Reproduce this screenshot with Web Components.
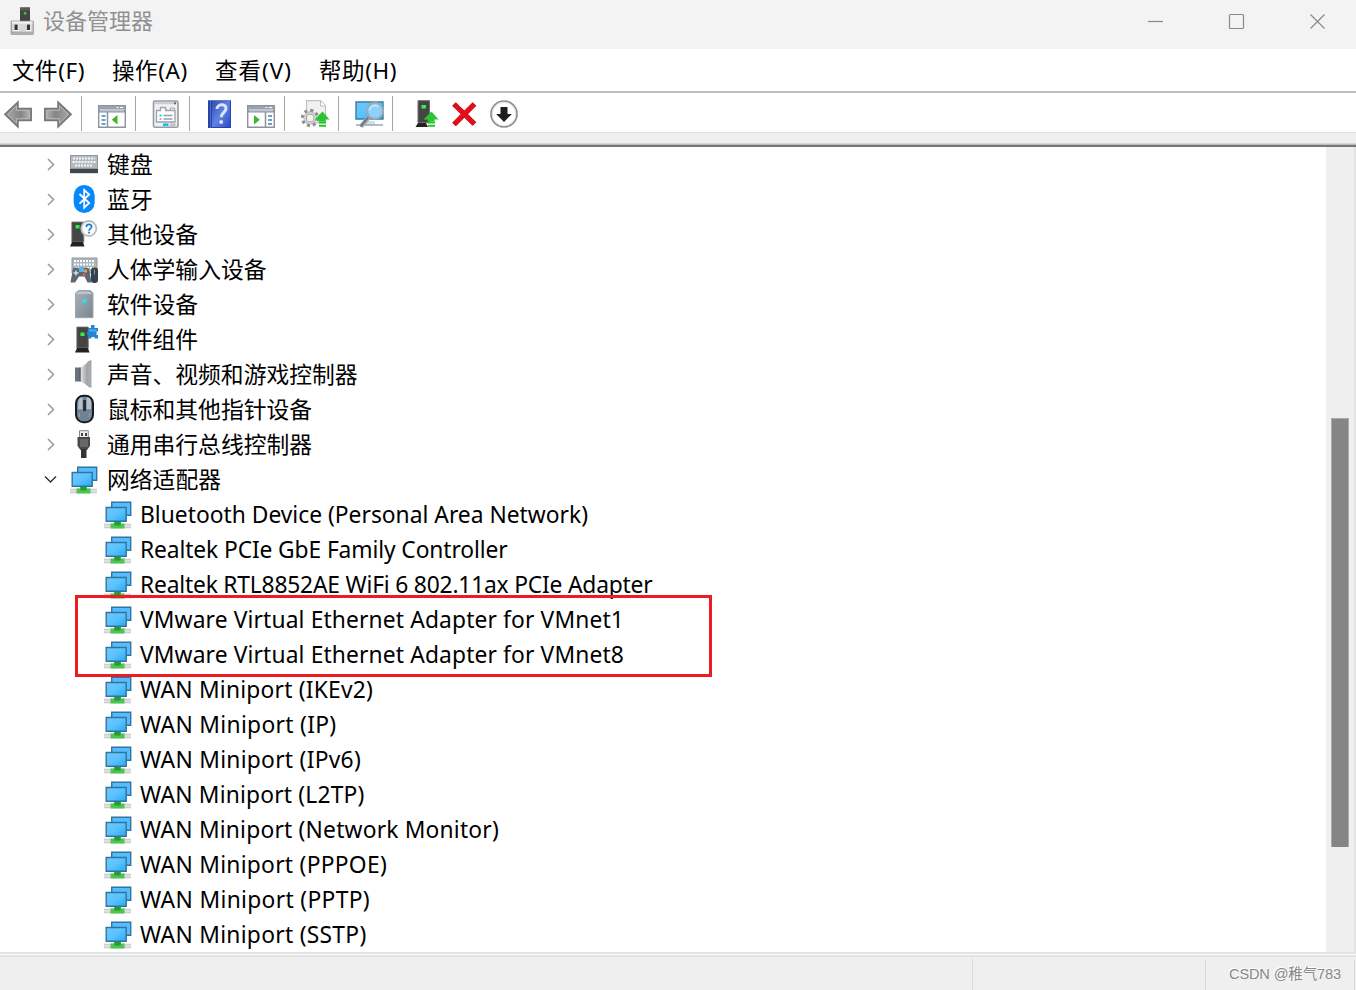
<!DOCTYPE html>
<html lang="zh-CN">
<head>
<meta charset="utf-8">
<title>设备管理器</title>
<style>
  html, body { height: 100%; }
  body {
    margin: 0;
    overflow: hidden;
    font-family: "Noto Sans", "Noto Sans CJK SC", sans-serif;
  }
</style>
</head>
<body>
<device-manager></device-manager>

<script>
const adapter = `<g transform="translate(0 1)">
  <path d="M0 22.500h27v5H0z" fill="#dedede"/><path d="M0 23.500h27M0 26.500h27" stroke="#c8c8c8" stroke-width=".7"/>
  <path d="M10 20h7v2.500h3.500v5H6.500v-5H10z" fill="#4cc552"/><path d="M10.500 21h6v3.500h-6z" fill="#259c34"/>
  <path d="M7.700 1.200h19v13h-19z" fill="#55bdff" stroke="#32749b" stroke-width="1.400"/>
  <path d="M2.200 6.500h20v13.700h-20z" fill="url(#sky)" stroke="#32749b" stroke-width="1.400"/></g>`;

const upArrow = `<path d="M21.500 11.500l7 8h-4v2h-7v-2h-4z" fill="#2bc52f"/><path d="M18 22.500h7M18 25.700h7" stroke="#24c32a" stroke-width="1.900"/>`;

const consoleFrame = `
  <path d="M.7 5.700h26.600v21.600H.7z" fill="#fff" stroke="#8b939e" stroke-width="1.400"/>
  <path d="M1 6h26v3H1z" fill="#98a2ae"/><path d="M1 11h26" stroke="#8b939e" stroke-width="3"/>
  <path d="M2 10.800h24" stroke="#d5dbe2"/><path d="M18.500 7.500h2M22 7.500h3" stroke="#fff"/>`;

// every icon sits in a 28 x 28 box
const ICONS = {
  app: `
    <path d="M11 .5h10v16H11z" fill="#444"/><path d="M11 .5h10v3H11z" fill="#5b5b5b"/><path d="M14.800 5h2.600v2.600h-2.600z" fill="#27cf35"/>
    <path d="M2.200 14.200h22v13h-22z" fill="#d7d7da" stroke="#8b8b8e"/><path d="M3 15.500h20.500" stroke="#f5f5f5" stroke-width="2"/>
    <path d="M5 17h4.500v7H5zM17 17h4.500v7H17z" fill="#f9f9f9"/><path d="M5.500 17.500h3.200v5.500H5.500zM17.800 17.500h3.200v5.500h-3.200z" fill="#333"/><path d="M3 25.700h20.500" stroke="#aaa" stroke-width="2"/>`,
  back: `<path d="M.8 14.300L14 2v6.500h13.200v12H14V27z" fill="#8a8a8a" stroke="#777" stroke-width="1.500"/><path d="M3.500 14.300L12.500 6v4.300h13v8.400h-13V23z" fill="url(#steel)" stroke="#b9b9b9"/>`,
  forward: `<g transform="matrix(-1 0 0 1 28 0)"><path d="M.8 14.300L14 2v6.500h13.200v12H14V27z" fill="#8a8a8a" stroke="#777" stroke-width="1.500"/><path d="M3.500 14.300L12.500 6v4.300h13v8.400h-13V23z" fill="url(#steel)" stroke="#b9b9b9"/></g>`,
  tree: `${consoleFrame}<path d="M9.500 12v15" stroke="#8b939e" stroke-width="1.500"/><path d="M3.500 16h4M3.500 20h4M3.500 24h4" stroke="#397fc0" stroke-width="1.500"/><path d="M19.500 15v9.500l-5.800-4.700z" fill="#3fb52b"/>`,
  actions: `${consoleFrame}<path d="M18.500 12v15" stroke="#8b939e" stroke-width="1.500"/><path d="M21 16h4M21 20h4M21 24h4" stroke="#397fc0" stroke-width="1.500"/><path d="M7 15v9.500l5.800-4.700z" fill="#3fb52b"/>`,
  properties: `
    <rect x="1.500" y="1" width="24.500" height="26.200" rx="1.500" fill="#eef0f2" stroke="#989da3" stroke-width="1.600"/>
    <path d="M2.500 3.200h22" stroke="#c8cdd2" stroke-width="2"/><path d="M22 3.200h2" stroke="#506d8c" stroke-width="2"/>
    <path d="M4.500 22V10.500h4v-3h5v3h9.500V22z" fill="#fff" stroke="#9ba3ac" stroke-width="1.300"/><path d="M14 8v2.500M18.500 8v2.500h4V8z" fill="none" stroke="#a5adb5"/>
    <path d="M11.500 15.500h9M11.500 19h9" stroke="#999fa6" stroke-width="1.300"/><path d="M7.500 15.500h2" stroke="#12c9e5" stroke-width="2"/><path d="M7.500 19h2" stroke="#999" stroke-width="1.500"/>
    <path d="M11 24.700h5.500" stroke="#0bc3e8" stroke-width="2.500"/><path d="M18 24.700h5.500" stroke="#bdc1c5" stroke-width="2.500"/>`,
  help: `
    <path d="M2 .3h23v27.700H2z" fill="#2844a8"/><path d="M6 1h18v26H6z" fill="url(#book)"/><path d="M4.500 1v27" stroke="#4d6bd0"/>
    <path d="M11 9c0-5 9-6 9-.7 0 4.500-4.800 4.200-4.800 9" fill="none" stroke="#dce5fc" stroke-width="3"/><circle cx="15.200" cy="22" r="2" fill="#dce5fc"/>`,
  scan: `
    <path d="M5.500.7h14l5 5v17h-19z" fill="#f1f1f1" stroke="#c0c0c0" stroke-width="1.200"/><path d="M19.500 1v5h5" fill="#fff" stroke="#bbb"/>
    <g fill="none" stroke="#909090"><circle cx="9" cy="18" r="7.400" stroke-width="3.500" stroke-dasharray="3 2.810"/><circle cx="9" cy="18" r="5" stroke-width="2.800"/><circle cx="9" cy="18" r="5.200" stroke="#d8d8d8" stroke-width="1.800"/></g>
    ${upArrow}`,
  search: `
    <path d="M1 2h27v17H1z" fill="url(#sky)" stroke="#357da6" stroke-width="1.400"/><path d="M8 21h12v4H8z" fill="#cfdfe8"/><path d="M1 25h27" stroke="#8eadc0" stroke-width="1.500"/>
    <path d="M14 17l-8 9.500" stroke="#a7b0b6" stroke-width="4.500"/><path d="M13.500 17l-8 9.500" stroke="#687a86" stroke-width="2"/><circle cx="20" cy="10.800" r="8" fill="#8bd2fb" stroke="#9eabb3" stroke-width="2"/><path d="M14.500 10c1-4 6-6 9-3" fill="none" stroke="#c7ecff" stroke-width="1.500"/>`,
  update: `<path d="M8 .7h11.500v22H8z" fill="#444" stroke="#6a6a6a"/><path d="M8 23h8l2 4H5.500z" fill="#222"/><path d="M11.500 5h4.500v3.500h-4.500z" fill="#35f050"/>${upArrow}`,
  remove: `<path d="M4 4l20.500 20M24.500 4L4 24.500" stroke="#bd0710" stroke-width="5.200"/><path d="M4.500 4.500L24 24M24 4.500L4.500 24" stroke="#e60d1b" stroke-width="4.400"/>`,
  disable: `<circle cx="14" cy="14" r="13" fill="#fff" stroke="#8d8d8d" stroke-width="1.700"/><circle cx="14" cy="14" r="11.800" fill="none" stroke="#ddd"/><path d="M10.500 7h7v7h4.300L14 22l-7.800-8h4.300z" fill="#1d1d1d"/>`,
  keyboard: `
    <path d="M0 5h28v15H0z" fill="#929aa1"/><path d="M1 6h26v12H1z" fill="#b2b9bf"/>
    <path d="M3 8.500h22M2.500 12h23M5 15.500h17" stroke="#f5f6f7" stroke-width="1.900" stroke-dasharray="2 1"/><path d="M0 19h28v4.200H0z" fill="#41474c"/>`,
  bluetooth: `<rect x="3.700" y="0" width="21" height="28" rx="10.500" fill="#0787f8"/><path d="M9.500 9l9.700 9-5 4.700V5l5 4.500-9.700 9.200" fill="none" stroke="#fff" stroke-width="1.800"/>`,
  other: `
    <path d="M1.800 2h12v20h-12z" fill="#454545" stroke="#777" stroke-width=".8"/><path d="M2 22h11l1.500 4.500H0z" fill="#222"/><path d="M5.500 5h4v3.500h-4z" fill="#27f244"/>
    <circle cx="18.800" cy="8.500" r="7.500" fill="#fafcfd" stroke="#b7bec3" stroke-width="1.800"/><path d="M16.300 7c0-3.400 5.300-3.400 5.300-.3 0 2-2.500 1.800-2.500 4" fill="none" stroke="#1c7fc6" stroke-width="1.700"/><path d="M18.200 11.800h1.800v1.700h-1.800z" fill="#1c7fc6"/>`,
  hid: `<g transform="translate(0 1)">
    <path d="M2 2h25v15H2z" fill="#adb4ba" stroke="#929aa0"/><path d="M4 5h21M4 8.500h21M5 12h19" stroke="#fff" stroke-width="2" stroke-dasharray="2 1"/>
    <path d="M3 12.500c3-2 5 0 7 0s5-2 9 0l2.500 14h-4l-3-6H9l-4 6H.5z" fill="#596875"/><path d="M9 11h5v5H9z" fill="#54b4ef"/><path d="M3.500 17h5M6 14.500v5" stroke="#ddd" stroke-width="1.500"/><circle cx="15.500" cy="15" r="1.700" fill="#f0a132"/><circle cx="14" cy="19" r="1.700" fill="#e25b44"/>
    <rect x="21" y="11.500" width="7" height="15.500" rx="3" fill="#36414b"/><path d="M24.500 13.500v5" stroke="#8d9aa5"/></g>`,
  software: `<path d="M5.500 3l3-2.500h11.800l2.700 2.500v24.700H5.500z" fill="url(#metal)" stroke="#9da5ab"/><path d="M6 4l3-2.500h10.500L22.500 4z" fill="#bec4c9"/><path d="M12.500 9h4v4h-4z" fill="#31dbe9"/>`,
  component: `<path d="M6.800 2h11.500v21H6.800z" fill="#444" stroke="#777" stroke-width=".8"/><path d="M7 23h11l1.500 4.500H5z" fill="#222"/><path d="M10.500 7.500h4v3.500h-4z" fill="#32f34c"/><path d="M21 0h3.500v3H28v3.500h-1.500V10H28v3.500h-3.500V12h-3v1.500H18V10h-1V7h1V3h3z" fill="#2385d1"/><path d="M19 4.500h7.500v2H19z" fill="#4daaf0"/>`,
  sound: `<path d="M5 7.500h6v14H5z" fill="#68737d"/><path d="M10.500 8l9.500-7.500v27l-9.500-6.500z" fill="url(#cone)"/><path d="M17.500 1.500L21.500 0v28l-4-2z" fill="#a5aaae"/><path d="M10 7.500v14" stroke="#4b5864"/>`,
  mouse: `<rect x="6" y=".8" width="17" height="26.500" rx="7.500" fill="#718295" stroke="#161b20" stroke-width="2"/><path d="M8.500 7c0-4 2-4.700 4-4.700v12H8zM16.500 2.300c3 0 4.500 1.500 4.500 5v7h-4.500z" fill="#b4c0cc"/><path d="M13.200 5h2.800v11h-2.800z" fill="#252b31"/><path d="M9.500 18v4M19.500 18v4" stroke="#91a0af"/>`,
  usb: `<path d="M9.500.7h8.800V8H9.500z" fill="#eee" stroke="#888"/><path d="M11 3h2v3h-2zM15 3h2v3h-2z" fill="#444"/><path d="M7.500 7h12.500v9l-3 4h-6.500l-3-4z" fill="#494949"/><path d="M10 9h8v8h-8z" fill="#676767"/><path d="M11 19h5.500v9H11z" fill="#343434"/>`,
  adapter
};

const DEFS = `<defs>
  <linearGradient id="sky" x2="1" y2="1"><stop stop-color="#72c7fa"/><stop offset=".5" stop-color="#5ac3ff"/><stop offset="1" stop-color="#27a9f5"/></linearGradient>
  <linearGradient id="steel"><stop stop-color="#a5a5a5"/><stop offset=".6" stop-color="#858585"/><stop offset="1" stop-color="#b0b0b0"/></linearGradient>
  <linearGradient id="book" y2="1"><stop stop-color="#314caa"/><stop offset=".5" stop-color="#5d83e6"/><stop offset="1" stop-color="#2d4bc1"/></linearGradient>
  <linearGradient id="metal" x2="1" y2="1"><stop stop-color="#a9b3ba"/><stop offset="1" stop-color="#78858e"/></linearGradient>
  <linearGradient id="cone"><stop stop-color="#e1e3e4"/><stop offset="1" stop-color="#85898d"/></linearGradient>
</defs>`;

class DmIcon extends HTMLElement {
  connectedCallback() {
    const root = this.attachShadow({ mode: "open" });
    root.innerHTML = `
      <style>
        :host { display: block; flex: none; width: 28px; height: 28px; }
        svg { display: block; overflow: visible; }
      </style>
      <svg width="28" height="28" viewBox="0 0 28 28">${DEFS}${ICONS[this.getAttribute("name")]}</svg>`;
  }
}
customElements.define("dm-icon", DmIcon);

// a single line of text, tracked so that it fills its "width" attribute
class DmLabel extends HTMLElement {
  connectedCallback() {
    const root = this.attachShadow({ mode: "open" });
    root.innerHTML = `
      <style>
        :host { display: block; flex: none; white-space: nowrap; }
        span { display: inline-block; }
      </style>
      <span><slot></slot></span>`;
    const $text = root.querySelector("span");
    const content = root.querySelector("slot").assignedNodes({ flatten: true })
      .map(node => node.textContent).join("");
    const width = Number(this.getAttribute("width"));
    const spare = width - $text.getBoundingClientRect().width;
    $text.style.letterSpacing = `${spare / content.length}px`;
    this.style.width = `${width}px`;
  }
}
customElements.define("dm-label", DmLabel);

class DmTitlebar extends HTMLElement {
  connectedCallback() {
    this.attachShadow({ mode: "open" }).innerHTML = `
      <style>
        :host {
          display: flex;
          align-items: center;
          box-sizing: border-box;
          height: 49px;
          padding: 0 0 7px 9px;
          background: #f3f3f3;
          color: #909090;
          font-size: 22px;
          line-height: 30px;
        }
        dm-label { margin: -2px 0 0 6px; }
        .buttons { display: flex; margin-left: auto; }
        .buttons svg { display: block; width: 81px; height: 42px; }
        .buttons path, .buttons rect { fill: none; stroke: #898989; stroke-width: 1.200; }
      </style>
      <dm-icon name="app"></dm-icon>
      <dm-label width="110"><slot></slot></dm-label>
      <div class="buttons">
        <svg viewBox="0 0 81 42"><path d="M35 21.500h15"/></svg>
        <svg viewBox="0 0 81 42"><rect x="35.500" y="14.500" width="14" height="14" rx="1"/></svg>
        <svg viewBox="0 0 81 42"><path d="M35.500 14.500l14 14M49.500 14.500l-14 14"/></svg>
      </div>`;
  }
}
customElements.define("dm-titlebar", DmTitlebar);

class DmMenubar extends HTMLElement {
  connectedCallback() {
    this.attachShadow({ mode: "open" }).innerHTML = `
      <style>
        :host {
          display: flex;
          align-items: center;
          gap: 27px;
          box-sizing: border-box;
          height: 44px;
          padding: 2px 12px 0 12px;
          border-bottom: 2px solid #bcc0c3;
          font-size: 22.500px;
          line-height: 32px;
        }
      </style>
      <slot></slot>`;
  }
}
customElements.define("dm-menubar", DmMenubar);

class DmToolbar extends HTMLElement {
  connectedCallback() {
    const groups = [
      ["back", "forward"], ["tree"], ["properties"], ["help", "actions"],
      ["scan"], ["search"], ["update", "remove", "disable"]
    ];
    this.attachShadow({ mode: "open" }).innerHTML = `
      <style>
        :host {
          display: flex;
          box-sizing: border-box;
          height: 54px;
          flex-direction: column;
        }
        nav { display: flex; height: 39px; padding-left: 4px; box-sizing: border-box; }
        .group { display: flex; padding-top: 7px; gap: 13px; }
        .group:first-child, .group:last-child { gap: 12px; }
        .group + .group { margin-left: 9px; }
        .group + .group::before {
          content: "";
          width: 1px;
          height: 35px;
          margin: -4px 3px 0 0;
          background: #a5a5a5;
        }
        .group:last-child::before { margin-right: 5px; }
        .edge {
          flex: 1;
          box-sizing: border-box;
          border-top: 1px solid #dedede;
          border-bottom: 2px solid #777;
          background: #efefef;
          box-shadow: inset 0 -1.500px #bcbcbc;
        }
      </style>
      <nav>${groups.map(g => `<div class="group">${g.map(n => `<dm-icon name="${n}"></dm-icon>`).join("")}</div>`).join("")}</nav>
      <div class="edge"></div>`;
  }
}
customElements.define("dm-toolbar", DmToolbar);

class DmRow extends HTMLElement {
  connectedCallback() {
    const state = this.getAttribute("state");
    const chevron = {
      closed: `<path d="M8 7l5.500 5.500L8 18" stroke="#999"/>`,
      open: `<path d="M5 9.500l5.500 5.500L16 9.500" stroke="#333"/>`
    }[state] || "";
    this.attachShadow({ mode: "open" }).innerHTML = `
      <style>
        :host { display: flex; align-items: center; height: 35px; }
        .twisty { flex: none; width: 30px; height: 26px; margin-left: 40px; fill: none; stroke-width: 1.500; }
        dm-icon { margin: -1px 9px 0 0; }
        ::slotted(dm-label) { margin-top: 1px; }
        :host([child]) .twisty { margin-left: 74px; }
        :host([child]) ::slotted(dm-label) { margin: 1px 0 0 -1px; }
      </style>
      <svg class="twisty" viewBox="0 0 30 26">${chevron}</svg>
      <dm-icon name="${this.getAttribute("icon")}"></dm-icon>
      <slot></slot>`;
  }
}
customElements.define("dm-row", DmRow);

class DmTree extends HTMLElement {
  connectedCallback() {
    const categories = [
      ["keyboard", "键盘", 46], ["bluetooth", "蓝牙", 46], ["other", "其他设备", 91],
      ["hid", "人体学输入设备", 159.500], ["software", "软件设备", 91], ["component", "软件组件", 91],
      ["sound", "声音、视频和游戏控制器", 250.500], ["mouse", "鼠标和其他指针设备", 205],
      ["usb", "通用串行总线控制器", 205], ["adapter", "网络适配器", 114]
    ];
    const adapters = [
      ["Bluetooth Device (Personal Area Network)", 448],
      ["Realtek PCIe GbE Family Controller", 367.500],
      ["Realtek RTL8852AE WiFi 6 802.11ax PCIe Adapter", 512.500],
      ["VMware Virtual Ethernet Adapter for VMnet1", 484],
      ["VMware Virtual Ethernet Adapter for VMnet8", 484],
      ["WAN Miniport (IKEv2)", 233], ["WAN Miniport (IP)", 196.500],
      ["WAN Miniport (IPv6)", 221], ["WAN Miniport (L2TP)", 224.500],
      ["WAN Miniport (Network Monitor)", 359], ["WAN Miniport (PPPOE)", 247],
      ["WAN Miniport (PPTP)", 230], ["WAN Miniport (SSTP)", 226.500]
    ];
    this.attachShadow({ mode: "open" }).innerHTML = `
      <style>
        :host {
          display: flex;
          position: relative;
          height: 805px;
          font-size: 22.800px;
          line-height: 34px;
        }
        .rows { flex: 1; }
        .scroll { width: 28px; border-right: 2px solid #e3e3e3; background: #efefef; }
        .thumb { width: 16px; height: 428px; margin: 271px 0 0 5px; background: #858585; border: 0 solid #aaa; border-width: 1px 1px 0 1px; }
        /* marks the two VMware adapters, on top of the rows */
        .mark {
          position: absolute;
          left: 75px;
          top: 448px;
          width: 637px;
          height: 82px;
          box-sizing: border-box;
          border: 3px solid #ed1c24;
        }
      </style>
      <div class="rows">
        ${categories.map(([icon, text, w]) => `<dm-row icon="${icon}" state="${icon === "adapter" ? "open" : "closed"}"><dm-label width="${w}">${text}</dm-label></dm-row>`).join("")}
        ${adapters.map(([text, w]) => `<dm-row child icon="adapter"><dm-label width="${w}">${text}</dm-label></dm-row>`).join("")}
      </div>
      <div class="scroll"><div class="thumb"></div></div>
      <div class="mark"></div>`;
  }
}
customElements.define("dm-tree", DmTree);

class DmStatusbar extends HTMLElement {
  connectedCallback() {
    this.attachShadow({ mode: "open" }).innerHTML = `
      <style>
        :host {
          display: flex;
          box-sizing: border-box;
          height: 38px;
          border-top: 2px solid #e3e3e3;
          background: #efefef;
          box-shadow: inset 0 1px #fff, inset 0 3px #e3e3e3;
          padding-top: 5px;
        }
        div { box-sizing: border-box; border-right: 1px solid #d9d9d9; }
        .wide { width: 973px; }
        .mid { width: 233px; }
        .credit {
          width: 149px;
          padding: 1px 0 0 23px;
          color: #888;
          font: 14.500px/28px "Liberation Sans", "Noto Sans CJK SC", sans-serif;
          text-shadow: -1px -1px #fff;
        }
      </style>
      <div class="wide"></div>
      <div class="mid"></div>
      <div class="credit"><dm-label width="112"><slot></slot></dm-label></div>`;
  }
}
customElements.define("dm-statusbar", DmStatusbar);

class DeviceManager extends HTMLElement {
  connectedCallback() {
    this.attachShadow({ mode: "open" }).innerHTML = `
      <style>
        :host {
          display: flex;
          flex-direction: column;
          height: 990px;
          overflow: hidden;
          background: #fff;
          color: #000;
        }
      </style>
      <dm-titlebar>设备管理器</dm-titlebar>
      <dm-menubar>
        <dm-label width="73">文件(F)</dm-label>
        <dm-label width="76">操作(A)</dm-label>
        <dm-label width="77">查看(V)</dm-label>
        <dm-label width="78">帮助(H)</dm-label>
      </dm-menubar>
      <dm-toolbar></dm-toolbar>
      <dm-tree></dm-tree>
      <dm-statusbar>CSDN @稚气783</dm-statusbar>`;
  }
}
customElements.define("device-manager", DeviceManager);
</script>
</body>
</html>
